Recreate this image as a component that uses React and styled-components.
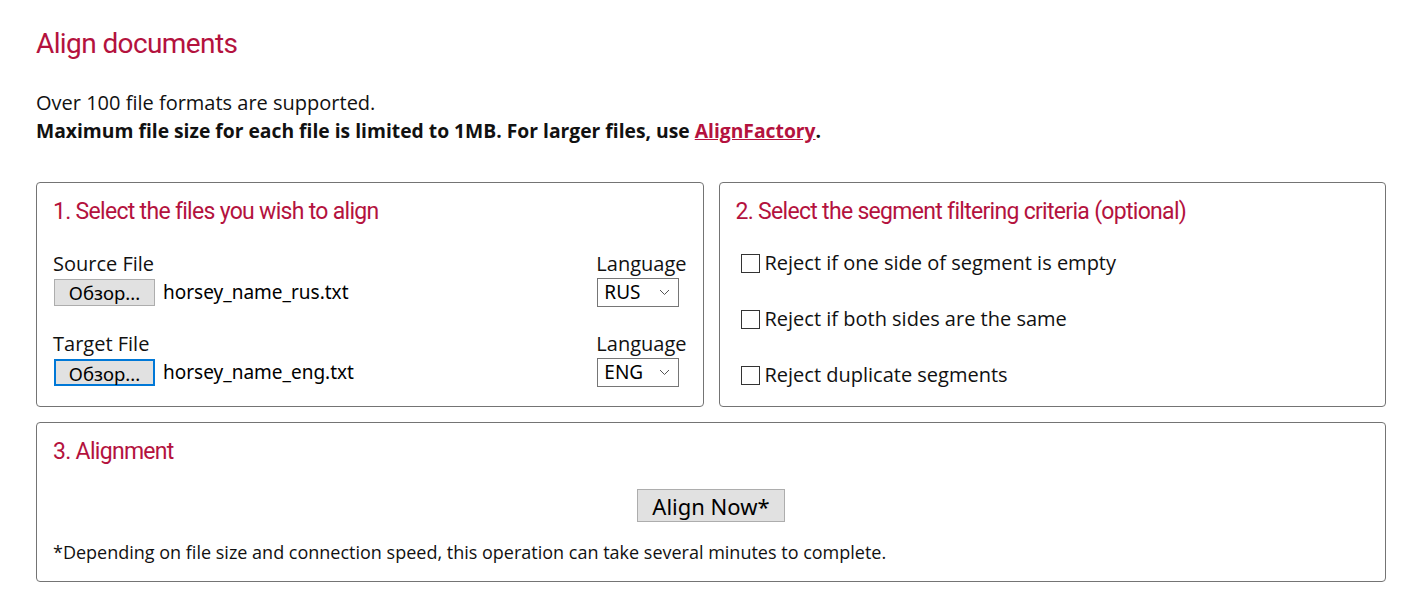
import React from "react";
import styled, { createGlobalStyle } from "styled-components";

const GlobalStyle = createGlobalStyle`
  body {
    margin: 0;
    background: #fff;
    font-family: "Open Sans", "Noto Sans", sans-serif;
    color: #111;
  }
`;

const Page = styled.div`
  width: 1350px;
  padding: 24px 0 0 36px;
`;

const Title = styled.h1`
  font-family: Roboto, sans-serif;
  font-weight: 400;
  font-size: 28px;
  line-height: 40px;
  color: #b4123e;
  margin: 0 0 25px;
  letter-spacing: -0.6px;
`;

const Intro = styled.p`
  font-size: 20px;
  line-height: 28px;
  margin: 0 0 37px;
`;

const Strong = styled.strong`
  font-weight: 700;
  font-size: 19.3px;
`;

const Link = styled.a`
  color: #b4123e;
  text-decoration: underline;
`;

const Row = styled.div`
  display: grid;
  grid-template-columns: 1fr 1fr;
  gap: 15px;
  margin-bottom: 15px;
`;

const Panel = styled.section`
  border: 1px solid #747474;
  border-radius: 4px;
  padding: 14px 16px 16px;
  min-height: ${(p) => p.$h || 0}px;
  box-sizing: border-box;
`;

const PanelTitle = styled.h2`
  font-family: Roboto, sans-serif;
  font-weight: 400;
  font-size: 23px;
  line-height: 30px;
  color: #b4123e;
  margin: 0 0 ${(p) => p.$gap || 24}px;
  letter-spacing: -0.7px;
`;

const FileGrid = styled.div`
  display: grid;
  grid-template-columns: 1fr auto;
  row-gap: 24px;
`;

const Field = styled.div`
  display: flex;
  flex-direction: column;
  align-items: flex-start;
`;

const Label = styled.span`
  font-size: 20px;
  line-height: 26px;
`;

const FileLine = styled.div`
  display: flex;
  align-items: center;
  gap: 8px;
  height: 30px;
`;

const BrowseButton = styled.button`
  width: 101px;
  height: 27px;
  margin-left: 1px;
  background: #e1e1e1;
  border: ${(p) => (p.$focused ? "2px solid #0078d7" : "1px solid #adadad")};
  font-family: "Noto Sans", "Open Sans", sans-serif;
  font-size: 18.5px;
  color: #000;
  padding: 0;
  box-sizing: border-box;
`;

const FileName = styled.span`
  font-family: "Noto Sans", "Open Sans", sans-serif;
  font-size: 19px;
  color: #000;
`;

const Select = styled.div`
  width: 82px;
  height: 29px;
  margin-left: 1px;
  border: 1px solid #767676;
  box-sizing: border-box;
  display: flex;
  align-items: center;
  justify-content: space-between;
  padding: 0 8px 0 6px;
  font-family: "Noto Sans", "Open Sans", sans-serif;
  font-size: 19px;
  color: #000;
`;

const Chevron = () => (
  <svg width="11" height="7" viewBox="0 0 11 7">
    <path d="M1 1l4.5 4.5L10 1" fill="none" stroke="#555" strokeWidth="1" />
  </svg>
);

const Checks = styled.div`
  display: flex;
  flex-direction: column;
  gap: 32px;
  padding-left: 5px;
`;

const CheckRow = styled.label`
  display: flex;
  align-items: center;
  gap: 5px;
  font-size: 20px;
  line-height: 24px;
`;

const Box = styled.span`
  width: 19px;
  height: 19px;
  border: 1px solid #333;
  box-sizing: border-box;
  background: #fff;
`;

const Center = styled.div`
  display: flex;
  justify-content: center;
  margin-bottom: 18px;
`;

const AlignButton = styled.button`
  width: 148px;
  height: 33px;
  background: #e1e1e1;
  border: 1px solid #adadad;
  font-family: "Noto Sans", "Open Sans", sans-serif;
  font-size: 22px;
  color: #000;
  padding: 0;
`;

const Note = styled.p`
  font-size: 18px;
  line-height: 24px;
  margin: 0;
`;

const files = [
  { label: "Source File", name: "horsey_name_rus.txt", lang: "RUS" },
  { label: "Target File", name: "horsey_name_eng.txt", lang: "ENG", focused: true },
];

const checks = [
  "Reject if one side of segment is empty",
  "Reject if both sides are the same",
  "Reject duplicate segments",
];

export default function App() {
  return (
    <Page>
      <GlobalStyle />
      <Title>Align documents</Title>
      <Intro>
        Over 100 file formats are supported.
        <br />
        <Strong>
          Maximum file size for each file is limited to 1MB. For larger files,
          use <Link href="#">AlignFactory</Link>.
        </Strong>
      </Intro>
      <Row>
        <Panel $h={225}>
          <PanelTitle>1. Select the files you wish to align</PanelTitle>
          <FileGrid>
            {files.map((f) => (
              <React.Fragment key={f.label}>
                <Field>
                  <Label>{f.label}</Label>
                  <FileLine>
                    <BrowseButton $focused={f.focused}>Обзор...</BrowseButton>
                    <FileName>{f.name}</FileName>
                  </FileLine>
                </Field>
                <Field>
                  <Label>Language</Label>
                  <FileLine>
                    <Select>
                      {f.lang}
                      <Chevron />
                    </Select>
                  </FileLine>
                </Field>
              </React.Fragment>
            ))}
          </FileGrid>
        </Panel>
        <Panel $h={225}>
          <PanelTitle>
            2. Select the segment filtering criteria (optional)
          </PanelTitle>
          <Checks>
            {checks.map((c) => (
              <CheckRow key={c}>
                <Box />
                {c}
              </CheckRow>
            ))}
          </Checks>
        </Panel>
      </Row>
      <Panel $h={160}>
        <PanelTitle $gap={22}>3. Alignment</PanelTitle>
        <Center>
          <AlignButton>Align Now*</AlignButton>
        </Center>
        <Note>
          *Depending on file size and connection speed, this operation can take
          several minutes to complete.
        </Note>
      </Panel>
    </Page>
  );
}
